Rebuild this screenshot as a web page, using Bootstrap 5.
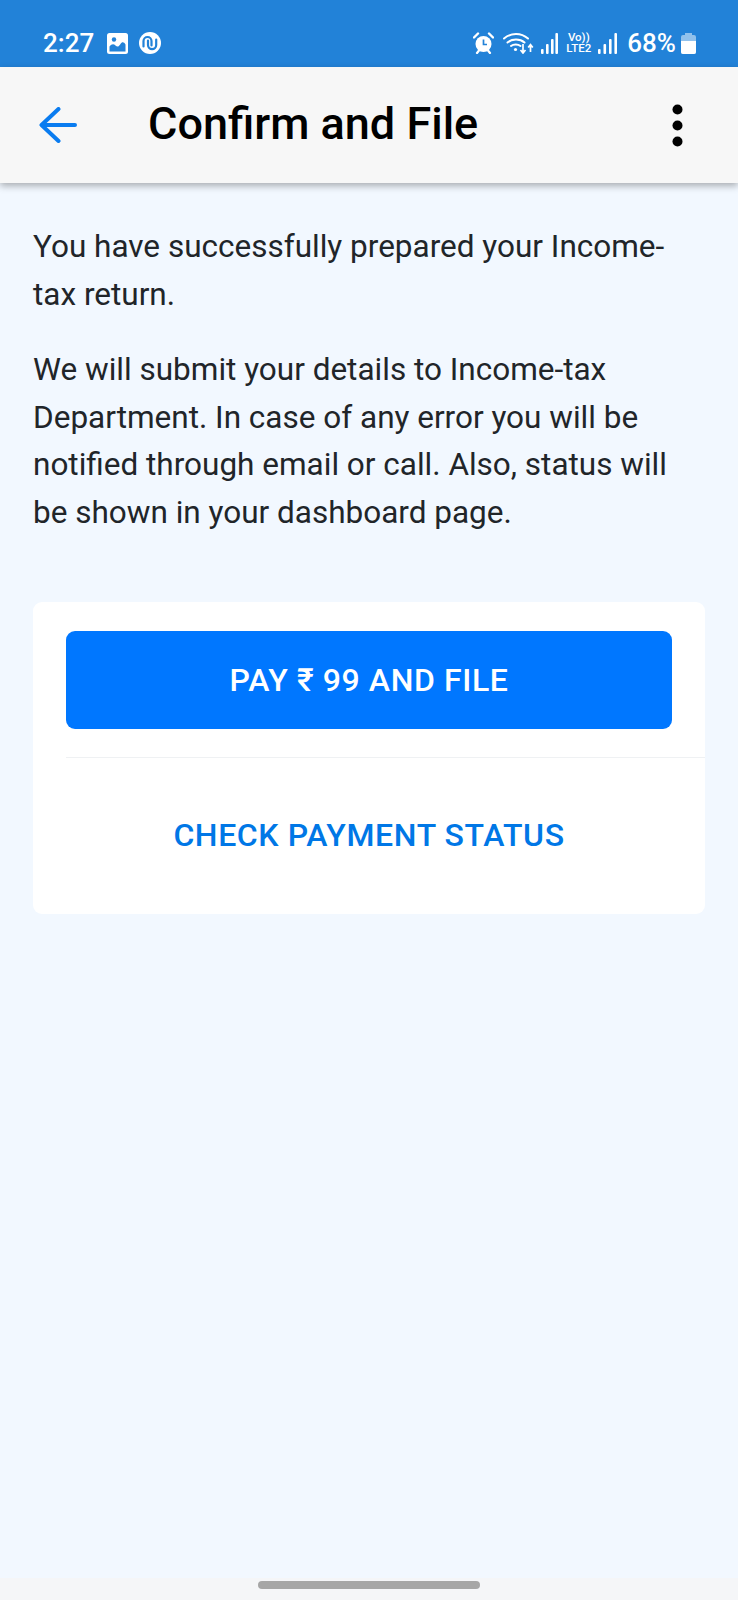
<!DOCTYPE html>
<html lang="en">
<head>
  <meta charset="UTF-8" />
  <title>Confirm and File</title>
  <meta name="viewport" content="width=device-width, initial-scale=1" />
  <link href="https://cdn.jsdelivr.net/npm/bootstrap@5.3.0/dist/css/bootstrap.min.css" rel="stylesheet" />
  <style>
    html, body {
      height: 100%;
    }

    body {
      background: #f2f8ff;
      font-family: Roboto, sans-serif;
      color: #212529;
    }

    #phone {
      height: 1600px;
      overflow: hidden;
    }

    /* Android status bar */
    #statusBar {
      height: 67px;
      background: #2282d8;
      color: #fff;
      padding: 19px 42px 0 43px;
      font-size: 26px;
      font-weight: 500;
    }

    #statusBar svg {
      display: block;
      flex: none;
    }

    .clock-text {
      width: 50px;
      margin-right: 14px;
    }

    .gallery-icon {
      margin-right: 11px;
    }

    .alarm-icon {
      margin-left: auto;
      margin-right: 9px;
    }

    .wifi-icon {
      margin-right: 7px;
    }

    .volte-text {
      width: 27px;
      font-size: 11.5px;
      line-height: 11px;
      font-weight: 500;
      text-align: center;
      margin: 0 6px 0 7px;
    }

    .pct-text {
      margin-left: 10px;
      margin-right: 5px;
    }

    /* App bar */
    #appBar {
      height: 116px;
      background: #f7f7f7;
      box-shadow: 0 3px 7px rgba(0, 0, 0, 0.3);
      padding: 0 55px 0 39px;
      position: relative;
    }

    #appBar h1 {
      font-size: 45px;
      font-weight: 500;
      color: #000;
      margin: -3px 0 0 71px;
    }

    #content {
      padding: 40px 33px 0 33px;
    }

    .intro-text {
      font-size: 31.5px;
      line-height: 47.5px;
      margin-bottom: 28px;
    }

    #payCard {
      margin-top: 66px;
      background: #fff;
      border: 0;
      border-radius: 9px;
      padding: 29px 0 0 33px;
      height: 312px;
    }

    .pay-btn {
      display: block;
      width: 606px;
      height: 98px;
      background: #0077ff;
      border: 0;
      border-radius: 9px;
      color: #fff;
      font-size: 32px;
      font-weight: 500;
      letter-spacing: 0.6px;
    }

    .pay-divider {
      height: 1px;
      background: #eff1f3;
      margin-top: 28px;
    }

    .status-btn {
      display: block;
      width: 606px;
      height: 154px;
      background: none;
      border: 0;
      color: #0077e6;
      font-size: 32px;
      font-weight: 500;
      letter-spacing: 0.6px;
    }

    /* Gesture bar */
    #navStrip {
      position: absolute;
      left: 0;
      right: 0;
      top: 1578px;
      height: 22px;
      background: #f5f6f8;
    }

    #navPill {
      width: 222px;
      height: 8px;
      border-radius: 4px;
      background: #a6a6a6;
      margin-top: 3px;
    }
  </style>
</head>
<body>
  <div id="phone">
    <!-- Status bar -->
    <div id="statusBar" class="d-flex align-items-center">
      <span class="clock-text">2:27</span>
      <svg class="gallery-icon" width="21" height="21" viewBox="0 0 21 21">
        <rect width="21" height="21" rx="2.5" fill="#fff"/>
        <circle cx="7" cy="6.500" r="2.200" fill="#2282d8"/>
        <path d="M2.500 18.500v-5c2-2.500 4-3 6-1s3.500 1 5-1.500 3.500-2 5 .5v7z" fill="#2282d8"/>
      </svg>
      <svg width="22" height="22" viewBox="0 0 22 22">
        <circle cx="11" cy="11" r="11" fill="#fff"/>
        <path d="M4.500 14.500V9a4 4 0 0 1 8 0v4.500M9 8.500V13a4 4 0 0 0 8.200 0V7.500" fill="none" stroke="#2282d8" stroke-width="2.200" stroke-linecap="round"/>
      </svg>

      <svg class="alarm-icon" width="21" height="22" viewBox="0 0 21 22">
        <circle cx="10.500" cy="12" r="8" fill="#fff"/>
        <path d="M10.500 7.500v5h3.500" fill="none" stroke="#2282d8" stroke-width="1.700"/>
        <path d="M1 5.500l4-4M20 5.500l-4-4" stroke="#fff" stroke-width="2.400" stroke-linecap="round"/>
        <path d="M4 21l2-2.500M17 21l-2-2.500" stroke="#fff" stroke-width="2.200" stroke-linecap="round"/>
      </svg>
      <svg class="wifi-icon" width="31" height="22" viewBox="0 0 31 22">
        <path d="M1 6.500C8 .5 18 .5 25 6.500M4.500 10.500c4.500-4 12.500-4 17 0M8 14c2.500-2 7-2 9.500 0" fill="none" stroke="#fff" stroke-width="2" stroke-linecap="round"/>
        <circle cx="12.500" cy="17.500" r="1.600" fill="#fff"/>
        <path d="M20 12v9M17.500 18l2.500 3 2.500-3M27.500 20v-7M25.200 15.500l2.300-2.800 2.300 2.800" fill="none" stroke="#fff" stroke-width="1.700"/>
      </svg>
      <svg width="17" height="21" viewBox="0 0 17 21">
        <g fill="#fff">
          <rect x="0" y="16" width="2.600" height="5" rx="1"/>
          <rect x="5" y="11" width="2.600" height="10" rx="1"/>
          <rect x="10" y="6" width="2.600" height="15" rx="1"/>
          <rect x="14.400" y="0" width="2.600" height="21" rx="1"/>
        </g>
      </svg>
      <span class="volte-text">Vo))<br />LTE2</span>
      <svg width="19" height="21" viewBox="0 0 19 21">
        <g fill="#fff">
          <rect x="0" y="16" width="2.600" height="5" rx="1"/>
          <rect x="5.500" y="11" width="2.600" height="10" rx="1"/>
          <rect x="11" y="6" width="2.600" height="15" rx="1"/>
          <rect x="16.400" y="0" width="2.600" height="21" rx="1"/>
        </g>
      </svg>
      <span class="pct-text">68%</span>
      <svg width="15" height="21" viewBox="0 0 15 21">
        <path d="M4 0h7v2h2a2 2 0 0 1 2 2v15a2 2 0 0 1-2 2H2a2 2 0 0 1-2-2V4a2 2 0 0 1 2-2h2z" fill="#fff" fill-opacity="0.5"/>
        <path d="M0 8h15v11a2 2 0 0 1-2 2H2a2 2 0 0 1-2-2z" fill="#fff"/>
      </svg>
    </div>

    <!-- App bar -->
    <div id="appBar" class="d-flex align-items-center">
      <svg width="38" height="36" viewBox="0 0 38 36">
        <path d="M36 18H3M19.500 2L2.500 18l17 16" fill="none" stroke="#0a7cf0" stroke-width="4" stroke-linecap="round" stroke-linejoin="round"/>
      </svg>
      <h1>Confirm and File</h1>
      <svg class="ms-auto" width="11" height="43" viewBox="0 0 11 43">
        <circle cx="5.500" cy="5.500" r="5" fill="#000"/>
        <circle cx="5.500" cy="21.500" r="5" fill="#000"/>
        <circle cx="5.500" cy="37.500" r="5" fill="#000"/>
      </svg>
    </div>

    <!-- Content -->
    <div id="content">
      <p class="intro-text">You have successfully prepared your Income-tax return.</p>
      <p class="intro-text">We will submit your details to Income-tax Department. In case of any error you will be notified through email or call. Also, status will be shown in your dashboard page.</p>

      <div id="payCard" class="card">
        <button type="button" class="btn pay-btn">PAY ₹ 99 AND FILE</button>
        <div class="pay-divider"></div>
        <button type="button" class="btn status-btn">CHECK PAYMENT STATUS</button>
      </div>
    </div>

    <!-- Gesture bar -->
    <div id="navStrip" class="d-flex justify-content-center">
      <div id="navPill"></div>
    </div>
  </div>

  <script src="https://cdn.jsdelivr.net/npm/bootstrap@5.3.0/dist/js/bootstrap.bundle.min.js"></script>
</body>
</html>
